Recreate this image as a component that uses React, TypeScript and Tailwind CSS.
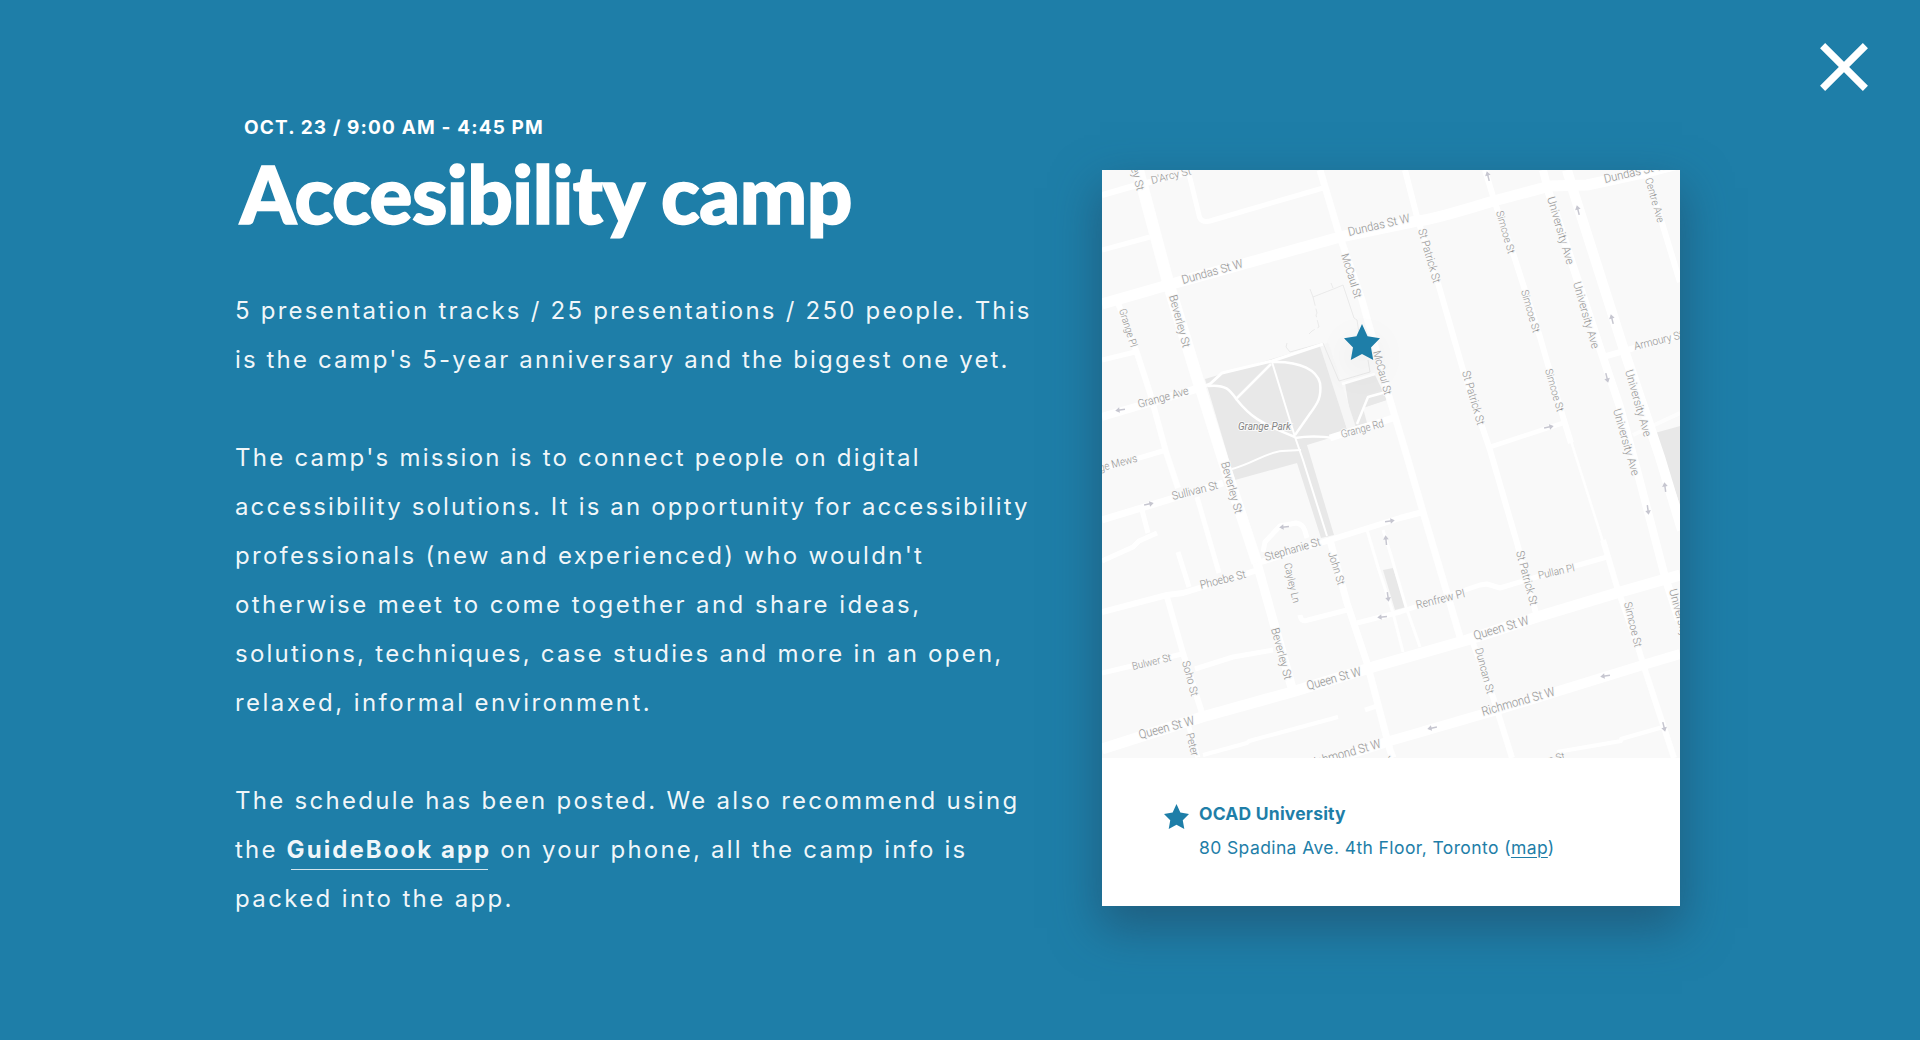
type Road = { d: string; w: number; faint?: boolean };
type Label = [text: string, x: number, y: number, angle: number, length: number, size: number];
type Arrow = [x: number, y: number, angle: number];

const ROADS: Road[] = [
  // Beverley, Dundas, Queen and Richmond
  { d: "M36 0 L66 112 L98 217", w: 12 },
  { d: "M98 217 L121 290 L155 393", w: 11 },
  { d: "M155 393 L190 518", w: 9 },
  { d: "M0 134 L66 115 L238 67 L315 51 Q330 50 388 32 L448 16 L485 15 L545 2 L580 -7", w: 11 },
  { d: "M0 579 L100 547 L190 522 L271 497 L365 470 L435 447 L518 422 L578 405", w: 11 },
  { d: "M578 484 L541 495 L395 540 L288 571 L210 596", w: 10 },
  // University
  { d: "M441 0 L446 20 L470 93 L501 187 L518 237 L535 300 L563 407 L577 450", w: 8 },
  { d: "M465 0 L471 20 L521 177 L558 287 L580 360", w: 10 },
  { d: "M501 187 L578 165", w: 6 },
  { d: "M531 265 L578 243", w: 4, faint: true },
  { d: "M543 0 L560 53 L578 112", w: 6 },
  // McCaul, St Patrick, Duncan, Simcoe
  { d: "M218 0 L238 67 L260 130 L288 230 L306 290 L321 342 L358 467", w: 7 },
  { d: "M303 0 L315 47 L336 113 L361 200 L388 280 L415 373 L435 447", w: 6 },
  { d: "M371 473 L391 527 L410 588", w: 6 },
  { d: "M383 0 L393 33 L411 83 L438 167 L461 247 L469 273", w: 6 },
  { d: "M469 271 L501 372", w: 2.5 },
  { d: "M501 370 L515 417 L536 477 L543 500 L572 588", w: 6 },
  { d: "M388 277 L461 253", w: 4.5 },
  // North-west blocks
  { d: "M0 25 L28 17 L88 2", w: 6 },
  { d: "M86 0 L97 45 Q98 53 108 51 L221 18", w: 5 },
  { d: "M0 80 L48 67", w: 5 },
  { d: "M16 133 L35 183 L48 223 L64 282 L76 318", w: 6 },
  { d: "M0 190 L33 182", w: 5 },
  { d: "M0 247 L101 217", w: 8 },
  { d: "M0 299 L64 280", w: 5 },
  // South-west blocks
  { d: "M0 350 L121 313", w: 7 },
  { d: "M40 340 L46 363", w: 5 },
  { d: "M0 391 L31 377 L37 371 L55 363", w: 5 },
  { d: "M95 327 L117 403", w: 5 },
  { d: "M76 382 L87 417", w: 5 },
  { d: "M0 442 L65 425 L81 423 L156 400", w: 6 },
  { d: "M65 427 L81 483 L100 543", w: 6 },
  { d: "M0 503 L80 484", w: 5 },
  { d: "M93 499 L131 487 L171 480", w: 5 },
  { d: "M101 585 L145 573 L147 571 L236 547", w: 4 },
  { d: "M263 540 L275 536", w: 5 },
  { d: "M84 547 L96 588", w: 5 },
  // John, Stephanie, Renfrew
  { d: "M228 370 L245 433 L265 493 L288 580 L291 588", w: 7 },
  { d: "M156 393 L228 370 L298 348 L321 342", w: 6 },
  { d: "M161 382 L163 372 L178 356 L194 353 Q201 354 203 361 L205 368", w: 5 },
  { d: "M198 445 Q199 453 206 450 L245 440", w: 5 },
  { d: "M255 453 L298 442 L378 415 L385 414 L398 418 L441 405 L505 387", w: 5 },
  { d: "M265 360 L276 397 L291 443 L301 482", w: 3 },
  { d: "M281 360 L288 382 L304 437 L318 477", w: 3 },
  { d: "M455 582 L519 571 L519 569 L561 557", w: 4 },
  // Grange Rd
  { d: "M228 268 L291 248", w: 7 },
];

const PARK_PATHS: Road[] = [
  { d: "M101 217 L108 214 L120 203 L170 191 L221 174", w: 3 },
  { d: "M170 192 C200 191 215 201 218 213 C220 228 215 234 207 245 L193 265", w: 2.5 },
  { d: "M106 216 C124 214 128 220 135 230 C147 245 157 253 193 267", w: 2.5 },
  { d: "M170 192 L193 267 L201 290 L225 366", w: 2 },
  { d: "M169 194 L134 229", w: 2.5 },
  { d: "M193 268 C205 266 218 266 232 268", w: 2.5 },
  { d: "M130 299 C150 294 165 282 180 281 L199 280", w: 2 },
  { d: "M240 214 L273 204", w: 2.5 },
  { d: "M255 254 L266 227 L284 222", w: 2.5 },
];

const LABELS: Label[] = [
  ["D'Arcy St", 50, 14, -14, 41, 10.5],
  ["Beverley St", 21, -31, 75, 54, 11.5],
  ["Beverley St", 67, 126, 75, 54, 11.5],
  ["Dundas St W", 81, 114, -15.5, 63, 12],
  ["Dundas St W", 247, 66, -13, 63, 12],
  ["McCaul St", 239, 85, 72.5, 46, 11],
  ["McCaul St", 271, 182, 75, 45, 11],
  ["Grange Pl", 17, 140, 73, 39.5, 10.5],
  ["Grange Ave", 37, 238, -15.5, 52, 11.5],
  ["Grange Rd", 240, 268, -15, 44, 11],
  ["Grange Mews", -22, 307, -15, 60, 11],
  ["Sullivan St", 71, 330, -14, 47, 11.5],
  ["Beverley St", 119, 293, 74.5, 53, 11.5],
  ["Stephanie St", 164, 391, -16, 57.5, 11.5],
  ["Cayley Ln", 182, 394, 77, 40.5, 10.5],
  ["John St", 226, 383, 73, 34, 11],
  ["Phoebe St", 99, 419, -14, 47, 11.5],
  ["Beverley St", 169, 459, 75, 53, 11.5],
  ["Bulwer St", 31, 500, -13.5, 40, 10.5],
  ["Soho St", 80, 492, 75, 36, 11],
  ["Queen St W", 38, 569, -15, 57, 12.5],
  ["Queen St W", 206, 520, -15.5, 56, 12.5],
  ["Peter St", 84, 564, 76, 35, 11],
  ["Richmond St W", 207, 598, -16, 75.5, 12.5],
  ["John St", 286, 586, 75, 34, 10.5],
  ["Richmond St W", 381, 546, -16, 75.5, 12.5],
  ["Duncan St", 373, 479, 75, 47, 11],
  ["Queen St W", 373, 470, -16.5, 57, 12.5],
  ["St Patrick St", 414, 382, 75, 56, 11.5],
  ["Renfrew Pl", 315, 439, -14, 50, 11.5],
  ["Pullan Pl", 437, 409, -12.5, 37, 10.5],
  ["Simcoe St", 522, 433, 76.5, 46, 11],
  ["University Ave", 567, 420, 75, 70, 11.5],
  ["University Ave", 511, 240, 74, 69, 11.5],
  ["University Ave", 445, 28, 73.5, 70, 11.5],
  ["University Ave", 471, 113, 74, 69, 11.5],
  ["University Ave", 523, 201, 74, 69, 11.5],
  ["Nelson St", 423, 600, -15, 42, 10.5],
  ["St Patrick St", 316, 60, 74, 56, 11.5],
  ["St Patrick St", 360, 202, 74, 56, 11.5],
  ["Simcoe St", 394, 42, 74, 44, 10.5],
  ["Simcoe St", 419, 121, 74, 44, 10.5],
  ["Simcoe St", 443, 200, 74, 44, 10.5],
  ["Centre Ave", 543, 9, 74, 46, 10.5],
  ["Armoury St", 533, 180, -14, 50, 11],
  ["Dundas St W", 503, 13, -13, 63, 12],
];

const ARROWS: Arrow[] = [
  [18, 240, 172], [47, 334, -12], [182, 357, 174], [288, 351, -8],
  [284, 370, -96], [286, 427, 82], [280, 447, 174], [386, 6, -104],
  [476, 40, -104], [510, 149, -104], [505, 208, 76], [447, 257, -12],
  [563, 317, -98], [546, 340, 82], [503, 506, 172], [562, 557, 76],
  [330, 558, 168],
];

const STAR = "M12 0 L15.7 7.8 L24 9.1 L18 15 L19.5 23 L12 19.2 L4.5 23 L6 15 L0 9.1 L8.3 7.8 Z";

function Star({ className }: { className: string }) {
  return (
    <svg viewBox="0 0 24 23" preserveAspectRatio="none" className={className} aria-hidden="true">
      <path d={STAR} fill="#1e7ea8" />
    </svg>
  );
}

function StreetMap() {
  return (
    <svg viewBox="0 0 578 588" className="block h-[588px] w-[578px] bg-[#f9f9f9]">
      <g fill="#e8e8e8">
        <path d="M103 209 L220 174 L245 259 L228 268 L205 275 L232 365 L219 368 L195 293 L133 310 Z" />
        <path d="M243 213 L273 205 L285 230 L261 238 L265 253 L250 257 Z" />
        <path d="M281 400 L291 398 L304 437 L293 440 Z" />
        <path d="M553 263 L578 256 L578 335 Z" />
      </g>
      <path d="M222 174 L250 260" stroke="#f6f6f6" strokeWidth="9" fill="none" />
      <g fill="none" stroke="#e6e6e6" strokeWidth="0.8">
        <path d="M208 119 L211 127 L234 118 L241 115 L252 148 L255 150 L257 163" />
        <path d="M211 127 L215 143 L214 145 L217 157 L210 161 L207 164" strokeDasharray="9 3" />
        <path d="M229 113 L231 118" />
        <path d="M185 173 L184 177 L188 182 L221 173" stroke="#e4e4e4" />
        <path d="M221 173 L237 211 L268 202 L266 190" stroke="#e4e4e4" />
      </g>
      <g fill="none" stroke="#fff" strokeLinejoin="round">
        {ROADS.map((r) => (
          <path key={r.d} d={r.d} strokeWidth={r.w} opacity={r.faint ? 0.7 : 1} />
        ))}
        {PARK_PATHS.map((r) => (
          <path key={r.d} d={r.d} strokeWidth={r.w} />
        ))}
      </g>
      <g stroke="#c6c6d0" strokeWidth="1.5" fill="#c6c6d0">
        {ARROWS.map(([x, y, a]) => (
          <g key={`${x}-${y}`} transform={`translate(${x} ${y}) rotate(${a})`}>
            <path d="M-5 0 H2" fill="none" />
            <path d="M0.5 -2.8 L4.8 0 L0.5 2.8 Z" stroke="none" />
          </g>
        ))}
      </g>
      <g
        className="font-['Roboto',sans-serif] font-light"
        fill="#939393"
        stroke="#f9f9f9"
        strokeWidth="2"
        paintOrder="stroke"
      >
        {LABELS.map(([t, x, y, a, len, size]) => (
          <text
            key={`${t}-${x}-${y}`}
            transform={`translate(${x} ${y}) rotate(${a})`}
            fontSize={size}
            textLength={len}
            lengthAdjust="spacingAndGlyphs"
          >
            {t}
          </text>
        ))}
        <text
          x="136"
          y="260"
          className="font-normal italic"
          fontSize="10"
          fill="#858585"
          textLength="53"
          lengthAdjust="spacingAndGlyphs"
        >
          Grange Park
        </text>
      </g>
    </svg>
  );
}

export default function App() {
  return (
    <main className="relative flex h-[1040px] w-[1920px] items-start overflow-hidden bg-[#1e7ea8] pl-[235px] font-['Inter',sans-serif] text-white">
      <article className="w-[867px] shrink-0 pt-[116px] whitespace-nowrap">
        <p className="ml-[9px] text-[19px] leading-6 font-bold tracking-[1.15px]">OCT. 23 / 9:00 AM - 4:45 PM</p>
        <h1 className="mt-[5px] ml-[5px] font-['Lato',sans-serif] text-[80px] leading-[96px] font-black tracking-[-0.5px] [-webkit-text-stroke:1.6px_#fff]">
          Accesibility camp
        </h1>
        <div className="mt-[45px] space-y-[49px] text-[24px] leading-[49px] text-white/95">
          <p>
            <span className="block tracking-[2.23px]">5 presentation tracks / 25 presentations / 250 people. This</span>
            <span className="block tracking-[2.13px]">is the camp's 5-year anniversary and the biggest one yet.</span>
          </p>
          <p>
            <span className="block tracking-[2.24px]">The camp's mission is to connect people on digital</span>
            <span className="block tracking-[2.14px]">accessibility solutions. It is an opportunity for accessibility</span>
            <span className="block tracking-[2.29px]">professionals (new and experienced) who wouldn't</span>
            <span className="block tracking-[2.43px]">otherwise meet to come together and share ideas,</span>
            <span className="block tracking-[2.24px]">solutions, techniques, case studies and more in an open,</span>
            <span className="block tracking-[2.43px]">relaxed, informal environment.</span>
          </p>
          <p>
            <span className="block tracking-[2.29px]">The schedule has been posted. We also recommend using</span>
            <span className="block tracking-[2.2px]">
              the{" "}
              <a className="relative font-bold tracking-[2.05px]">
                GuideBook app
                <span className="absolute right-[3px] bottom-[-6px] left-[4px] h-[1.5px] bg-white/80" />
              </a>{" "}
              on your phone, all the camp info is
            </span>
            <span className="block tracking-[2.37px]">packed into the app.</span>
          </p>
        </div>
      </article>

      <section className="mt-[170px] h-[736px] w-[578px] shrink-0 bg-white text-[#1e7ea8] shadow-[0_20px_44px_2px_rgba(33,70,95,0.55)]">
        <div className="relative">
          <StreetMap />
          <Star className="absolute top-[154px] left-[242px] h-[36px] w-[36px] drop-shadow-[0_12px_16px_rgba(0,0,0,0.08)]" />
        </div>
        <div className="flex gap-[10px] pt-[43px] pl-[62px] whitespace-nowrap">
          <Star className="mt-[3px] h-[25px] w-[25px]" />
          <div className="text-[17.5px]">
            <h2 className="leading-[26px] font-bold tracking-[0.2px]">OCAD University</h2>
            <p className="mt-[8px] leading-[26px] tracking-[0.4px]">
              80 Spadina Ave. 4th Floor, Toronto (
              <a className="underline decoration-1 underline-offset-[3px]">map</a>)
            </p>
          </div>
        </div>
      </section>

      <button aria-label="Close" className="absolute top-[43px] right-[52px] size-[48px]">
        <svg viewBox="0 0 48 48" className="size-full">
          <path d="M2.6 2.6 L45.4 45.4 M45.4 2.6 L2.6 45.4" stroke="#fff" strokeWidth="7.2" />
        </svg>
      </button>
    </main>
  );
}
